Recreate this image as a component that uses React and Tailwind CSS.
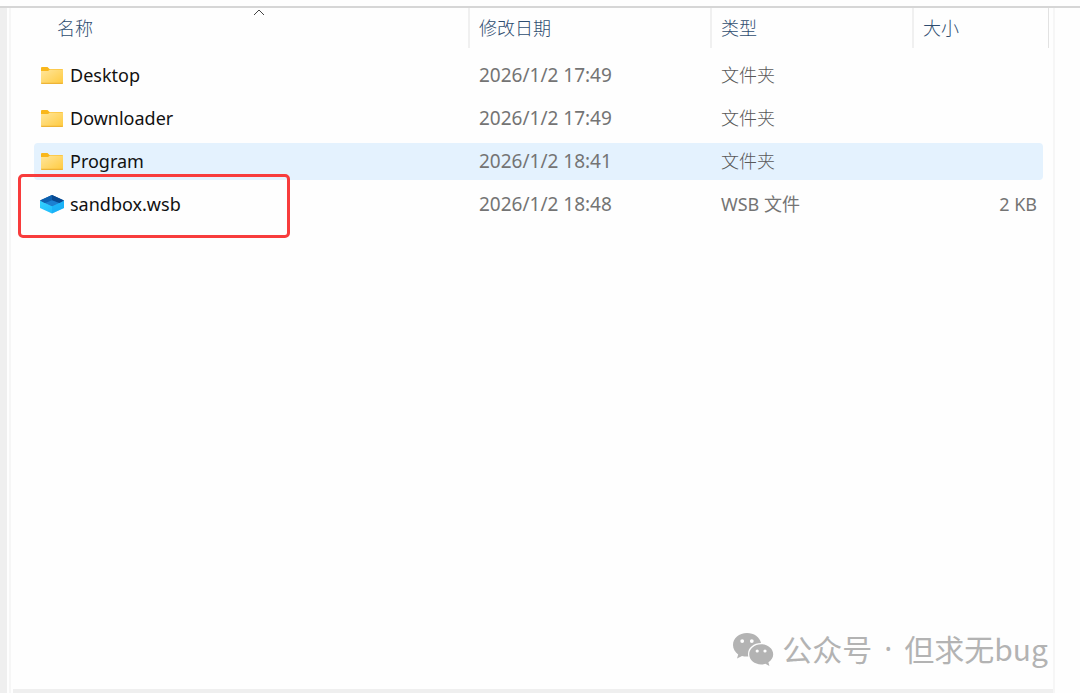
import React from 'react'

const files = [
  { name: 'Desktop', date: '2026/1/2 17:49', type: '文件夹', size: '', kind: 'folder' },
  { name: 'Downloader', date: '2026/1/2 17:49', type: '文件夹', size: '', kind: 'folder' },
  { name: 'Program', date: '2026/1/2 18:41', type: '文件夹', size: '', kind: 'folder', hovered: true },
  { name: 'sandbox.wsb', date: '2026/1/2 18:48', type: 'WSB 文件', size: '2 KB', kind: 'sandbox', marked: true },
]

function FolderIcon() {
  return (
    <svg className="h-6 w-6 shrink-0" viewBox="0 0 24 24" aria-hidden="true">
      <defs>
        <linearGradient id="folder" x1="0" y1="0" x2="1" y2="1">
          <stop offset="0" stopColor="#ffe69c" />
          <stop offset="1" stopColor="#ffca3e" />
        </linearGradient>
      </defs>
      <path d="M1 4a1 1 0 0 1 1-1h5.500l2 2H22a1 1 0 0 1 1 1v4H1z" fill="#f9b71c" />
      <path d="M1 7h7l2-1.500h13V19a1 1 0 0 1-1 1H2a1 1 0 0 1-1-1z" fill="url(#folder)" />
      <path d="M1 18.700h22V19a1 1 0 0 1-1 1H2a1 1 0 0 1-1-1z" fill="#eeb436" />
    </svg>
  )
}

function SandboxIcon() {
  return (
    <svg className="h-6 w-6 shrink-0" viewBox="0 1 24 24" aria-hidden="true">
      <defs>
        <linearGradient id="box-front" x1="0" y1="0" x2="1" y2="1">
          <stop offset="0" stopColor="#35d2ff" />
          <stop offset="1" stopColor="#17b4fa" />
        </linearGradient>
      </defs>
      <path d="M0 8.500 12 14l12-5.500V16l-12 5.500L0 16z" fill="url(#box-front)" />
      <path d="M24 8.500 12 14v7.500L24 16z" fill="#14a5f3" opacity=".5" />
      <path d="M12 3 0 8.500 12 14l12-5.500z" fill="#0c59a4" />
      <path d="M12 3v5.500L4.500 11 0 8.500z" fill="#0d61b0" />
      <path d="M12 3v5.500l7.500 2.500L24 8.500z" fill="#084a92" />
      <path d="M12 8.300 5 11 12 14.200l7-3.200z" fill="#1c80d2" />
    </svg>
  )
}

function WeChatIcon() {
  return (
    <svg className="h-[34px] w-[42px] shrink-0" viewBox="0 0 42 34" fill="#b3b3b3" aria-hidden="true">
      <path
        fillRule="evenodd"
        d="M15 1C7 1 1 6.200 1 13c0 3.900 2 7.200 5.200 9.400L5 26.500l5-2.600c1.700.5 3.800.8 6.300.7A11 11 0 0 1 16 22c0-6.300 5.700-11 13-11C27.800 5 22 1 15 1zM10.200 7.200a1.900 1.900 0 1 1 0 3.800 1.900 1.900 0 0 1 0-3.800zm9.600 0a1.900 1.900 0 1 1 0 3.800 1.900 1.900 0 0 1 0-3.800z"
      />
      <path
        fillRule="evenodd"
        d="M29.200 12.200c-6.700 0-12 4.500-12 10.100s5.300 10.100 12 10.100c1.500 0 2.900-.2 4.200-.6l4 2.100-1-3.600c2.900-1.900 4.800-4.700 4.800-8 0-5.600-5.300-10.100-12-10.100zm-4 5.200a1.600 1.600 0 1 1 0 3.200 1.600 1.600 0 0 1 0-3.200zm7.800 0a1.600 1.600 0 1 1 0 3.200 1.600 1.600 0 0 1 0-3.200z"
      />
    </svg>
  )
}

function FileRow({ file }) {
  const bg = file.hovered ? 'bg-[#e4f2fe]' : ''
  const typeStyle = file.kind === 'folder' ? 'font-light text-[#585858]' : ''
  return (
    <tr>
      <td className="relative p-0 pb-[6px]">
        <div className={`flex h-[37px] items-center gap-1.5 rounded-l-sm pl-[6px] text-[18px] text-[#111] ${bg}`}>
          {file.kind === 'folder' ? <FolderIcon /> : <SandboxIcon />}
          {file.name}
        </div>
        {file.marked && (
          <div className="pointer-events-none absolute -left-4 -top-3 h-16 w-[272px] rounded-[5px] border-3 border-[#f83c3c]" />
        )}
      </td>
      <td className="p-0 pb-[6px]">
        <div className={`flex h-[37px] items-center pl-[9px] text-[19px] ${bg}`}>{file.date}</div>
      </td>
      <td className="p-0 pb-[6px]">
        <div className={`flex h-[37px] items-center pl-[9px] text-[18px] ${typeStyle} ${bg}`}>{file.type}</div>
      </td>
      <td className="p-0 pb-[6px] pr-[6px]">
        <div className={`flex h-[37px] items-center justify-end rounded-r-sm pr-[6px] text-[18px] ${bg}`}>{file.size}</div>
      </td>
    </tr>
  )
}

export default function App() {
  return (
    <div className="flex min-h-screen flex-col bg-[#fefefe] pt-[6px] font-['Noto_Sans','Noto_Sans_CJK_SC',sans-serif] text-[#747474]">
      <div className="flex grow border-t-2 border-[#d6d6d6]">
        <div className="w-[7px] shrink-0 bg-[#efefef]" />
        <main className="relative ml-0.5 mr-[25px] flex min-w-0 grow flex-col border-x-2 border-[#f6f6f6] pl-[23px] pr-1">
          <table className="w-full table-fixed border-collapse">
            <colgroup>
              <col />
              <col className="w-[242px]" />
              <col className="w-[202px]" />
              <col className="w-[135px]" />
            </colgroup>
            <thead>
              <tr className="text-left text-[18px] text-[#2f4d70]">
                <th className="p-0 pb-[9px] font-light">
                  <div className="relative flex h-10 items-center border-r-2 border-[#f0f0f0] pl-[23px]">
                    名称
                    <svg
                      className="absolute left-1/2 top-0 h-2 w-4 fill-none stroke-[#444]"
                      viewBox="0 0 16 8"
                      aria-hidden="true"
                    >
                      <path d="M3 7 8 2l5 5" />
                    </svg>
                  </div>
                </th>
                <th className="p-0 pb-[9px] font-light">
                  <div className="flex h-10 items-center border-r-2 border-[#f0f0f0] pl-[9px]">修改日期</div>
                </th>
                <th className="p-0 pb-[9px] font-light">
                  <div className="flex h-10 items-center border-r-2 border-[#f0f0f0] pl-[9px]">类型</div>
                </th>
                <th className="p-0 pb-[9px] font-light">
                  <div className="flex h-10 items-center border-r border-[#e2e2e2] pl-[9px]">大小</div>
                </th>
              </tr>
            </thead>
            <tbody>
              {files.map(f => (
                <FileRow key={f.name} file={f} />
              ))}
            </tbody>
          </table>

          <div className="absolute bottom-[22px] right-[5px] flex items-center gap-2 font-['Noto_Sans_CJK_SC',sans-serif] text-[30px] text-[#b3b3b3]">
            <WeChatIcon />
            <div className="flex gap-3">
              <span>公众号</span>
              <span className="font-['Noto_Sans',sans-serif]">·</span>
              <span>但求无bug</span>
            </div>
          </div>

          <div className="-ml-[21px] -mr-1 mt-auto h-1 bg-[#efefef]" />
        </main>
      </div>
    </div>
  )
}
